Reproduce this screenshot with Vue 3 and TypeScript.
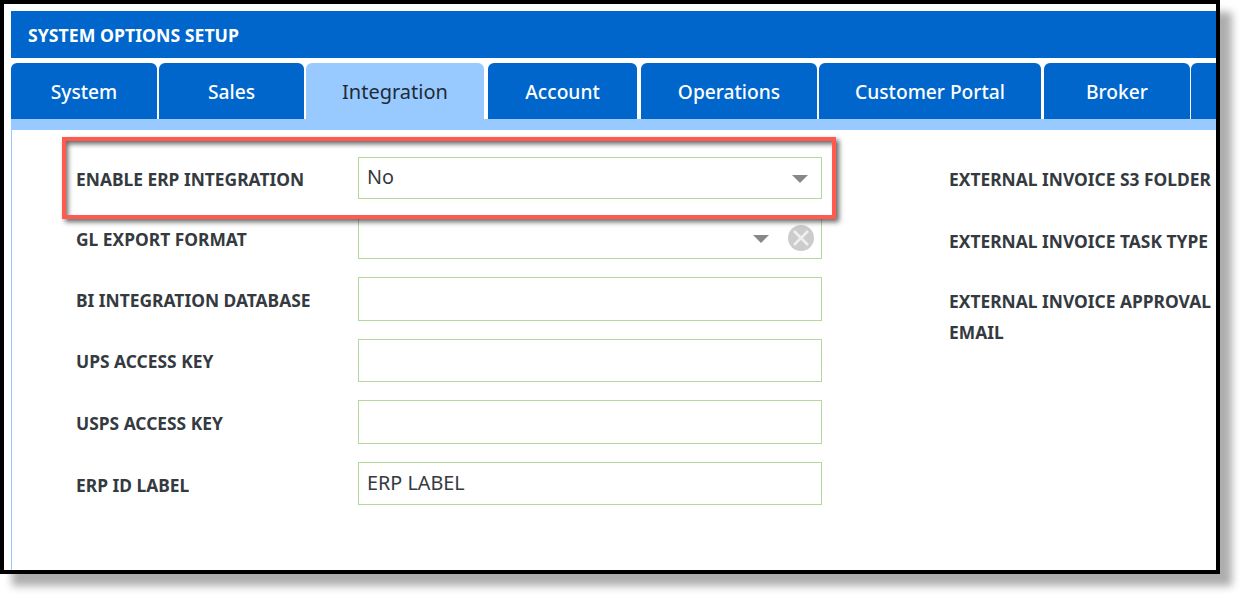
<script setup lang="ts">
const tabs = [
  { label: 'System', width: 146, gap: 2 },
  { label: 'Sales', width: 145, gap: 2 },
  { label: 'Integration', width: 178, gap: 4, active: true },
  { label: 'Account', width: 149, gap: 4 },
  { label: 'Operations', width: 176, gap: 2 },
  { label: 'Customer Portal', width: 222, gap: 3 },
  { label: 'Broker', width: 146, gap: 1 },
  { label: '', width: 60, gap: 0 },
]
const rows = [
  { label: 'ENABLE ERP INTEGRATION', value: 'No', select: true },
  { label: 'GL EXPORT FORMAT', value: '', select: true, clear: true },
  { label: 'BI INTEGRATION DATABASE', value: '' },
  { label: 'UPS ACCESS KEY', value: '' },
  { label: 'USPS ACCESS KEY', value: '' },
  { label: 'ERP ID LABEL', value: 'ERP LABEL' },
]
const side = ['EXTERNAL INVOICE S3 FOLDER', 'EXTERNAL INVOICE TASK TYPE', 'EXTERNAL INVOICE APPROVAL EMAIL']
</script>

<template>
  <div class="stage">
    <div class="frame">
      <div class="clip">
        <div class="title">SYSTEM OPTIONS SETUP</div>
        <div class="tabs">
          <div
            v-for="t in tabs"
            :key="t.label"
            class="tab"
            :class="{ active: t.active }"
            :style="{ flexBasis: t.width + 'px', marginRight: t.gap + 'px' }"
          >{{ t.label }}</div>
        </div>
        <div class="band"></div>
        <div class="body">
          <div class="col-left">
            <div v-for="r in rows" :key="r.label" class="row">
              <div class="label">{{ r.label }}</div>
              <div class="field" :class="{ sel: r.select }">
                <span class="value">{{ r.value }}</span>
                <span v-if="r.select" class="caret" :class="{ shifted: r.clear }"></span>
                <svg v-if="r.clear" class="clear" viewBox="0 0 26 26" width="26" height="26">
                  <circle cx="13" cy="13" r="13" fill="#cccccc" />
                  <path d="M6 6 20 20M20 6 6 20" stroke="#efefef" stroke-width="2.6" />
                </svg>
              </div>
            </div>
          </div>
          <div class="col-right">
            <div v-for="s in side" :key="s" class="side-label">{{ s }}</div>
          </div>
        </div>
      </div>
      <div class="highlight"></div>
    </div>
  </div>
</template>

<style>
html, body { margin: 0; background: #fff; }
</style>

<style scoped>
.stage {
  width: 1240px;
  height: 594px;
  overflow: hidden;
  background: #fff;
  font-family: "Noto Sans", "Open Sans", sans-serif;
}
.frame {
  position: relative;
  box-sizing: border-box;
  width: 1220px;
  height: 574px;
  border: 4px solid #000;
  background: #fff;
  box-shadow: 12px 12px 8px 0 rgba(0, 0, 0, 0.32);
  padding: 7px 0 0 7px;
}
.clip {
  height: 100%;
  overflow: hidden;
  display: flex;
  flex-direction: column;
}
.title {
  flex: none;
  height: 47px;
  line-height: 49px;
  padding-left: 17px;
  background: #0066cc;
  color: #fff;
  font-size: 17.7px;
  font-weight: 700;
}
.tabs {
  flex: none;
  display: flex;
  margin-top: 5px;
  height: 56px;
}
.tab {
  flex: 0 0 auto;
  box-sizing: border-box;
  background: #0066cc;
  color: #fff;
  border-radius: 6px 6px 0 0;
  text-align: center;
  line-height: 57px;
  font-size: 19.2px;
  font-weight: 500;
  white-space: nowrap;
}
.tab.active {
  background: #99caff;
  color: #212b36;
  font-size: 20px;
  font-weight: 400;
}
.band {
  flex: none;
  height: 11px;
  background: #99caff;
}
.body {
  flex: 1;
  display: flex;
  box-sizing: border-box;
  border-left: 1px solid #99caff;
  padding: 27px 0 0 64px;
}
.col-left {
  width: 746px;
  flex: none;
  display: flex;
  flex-direction: column;
  gap: 18px;
}
.row {
  display: flex;
  align-items: center;
}
.label {
  box-sizing: border-box;
  width: 282px;
  padding-top: 2px;
  flex: none;
  font-size: 17.4px;
  font-weight: 700;
  color: #343a40;
  white-space: nowrap;
}
.field {
  position: relative;
  box-sizing: border-box;
  width: 464px;
  height: 43.6px;
  border: 1px solid #b5d99c;
  background: #fff;
  display: flex;
  align-items: center;
  padding: 0 8px;
  font-size: 19.8px;
  color: #343a40;
}
.field.sel { height: 42px; }
.value { position: relative; top: -1px; }
.field.sel .value { top: -2px; }
.caret {
  position: absolute;
  right: 13px;
  top: 17px;
  width: 0;
  height: 0;
  border-left: 8px solid transparent;
  border-right: 8px solid transparent;
  border-top: 8px solid #888;
}
.caret.shifted { right: 52px; }
.clear {
  position: absolute;
  right: 7px;
  top: 7px;
}
.col-right {
  padding-left: 127px;
  width: 300px;
  flex: none;
}
.side-label {
  font-size: 17.4px;
  font-weight: 700;
  color: #343a40;
  line-height: 31px;
  margin-bottom: 23px;
  padding-top: 7px;
  width: 270px;
}
.side-label:first-child { margin-bottom: 24px; }
.side-label:nth-child(2) { margin-bottom: 22px; }
.highlight {
  position: absolute;
  left: 58px;
  top: 133px;
  width: 766px;
  height: 74px;
  border: 4px solid #ff5a4d;
  box-shadow: 3px 3px 5px 0 rgba(0, 0, 0, 0.6), inset 3px 4px 5px -1px rgba(0, 0, 0, 0.6);
}
</style>
